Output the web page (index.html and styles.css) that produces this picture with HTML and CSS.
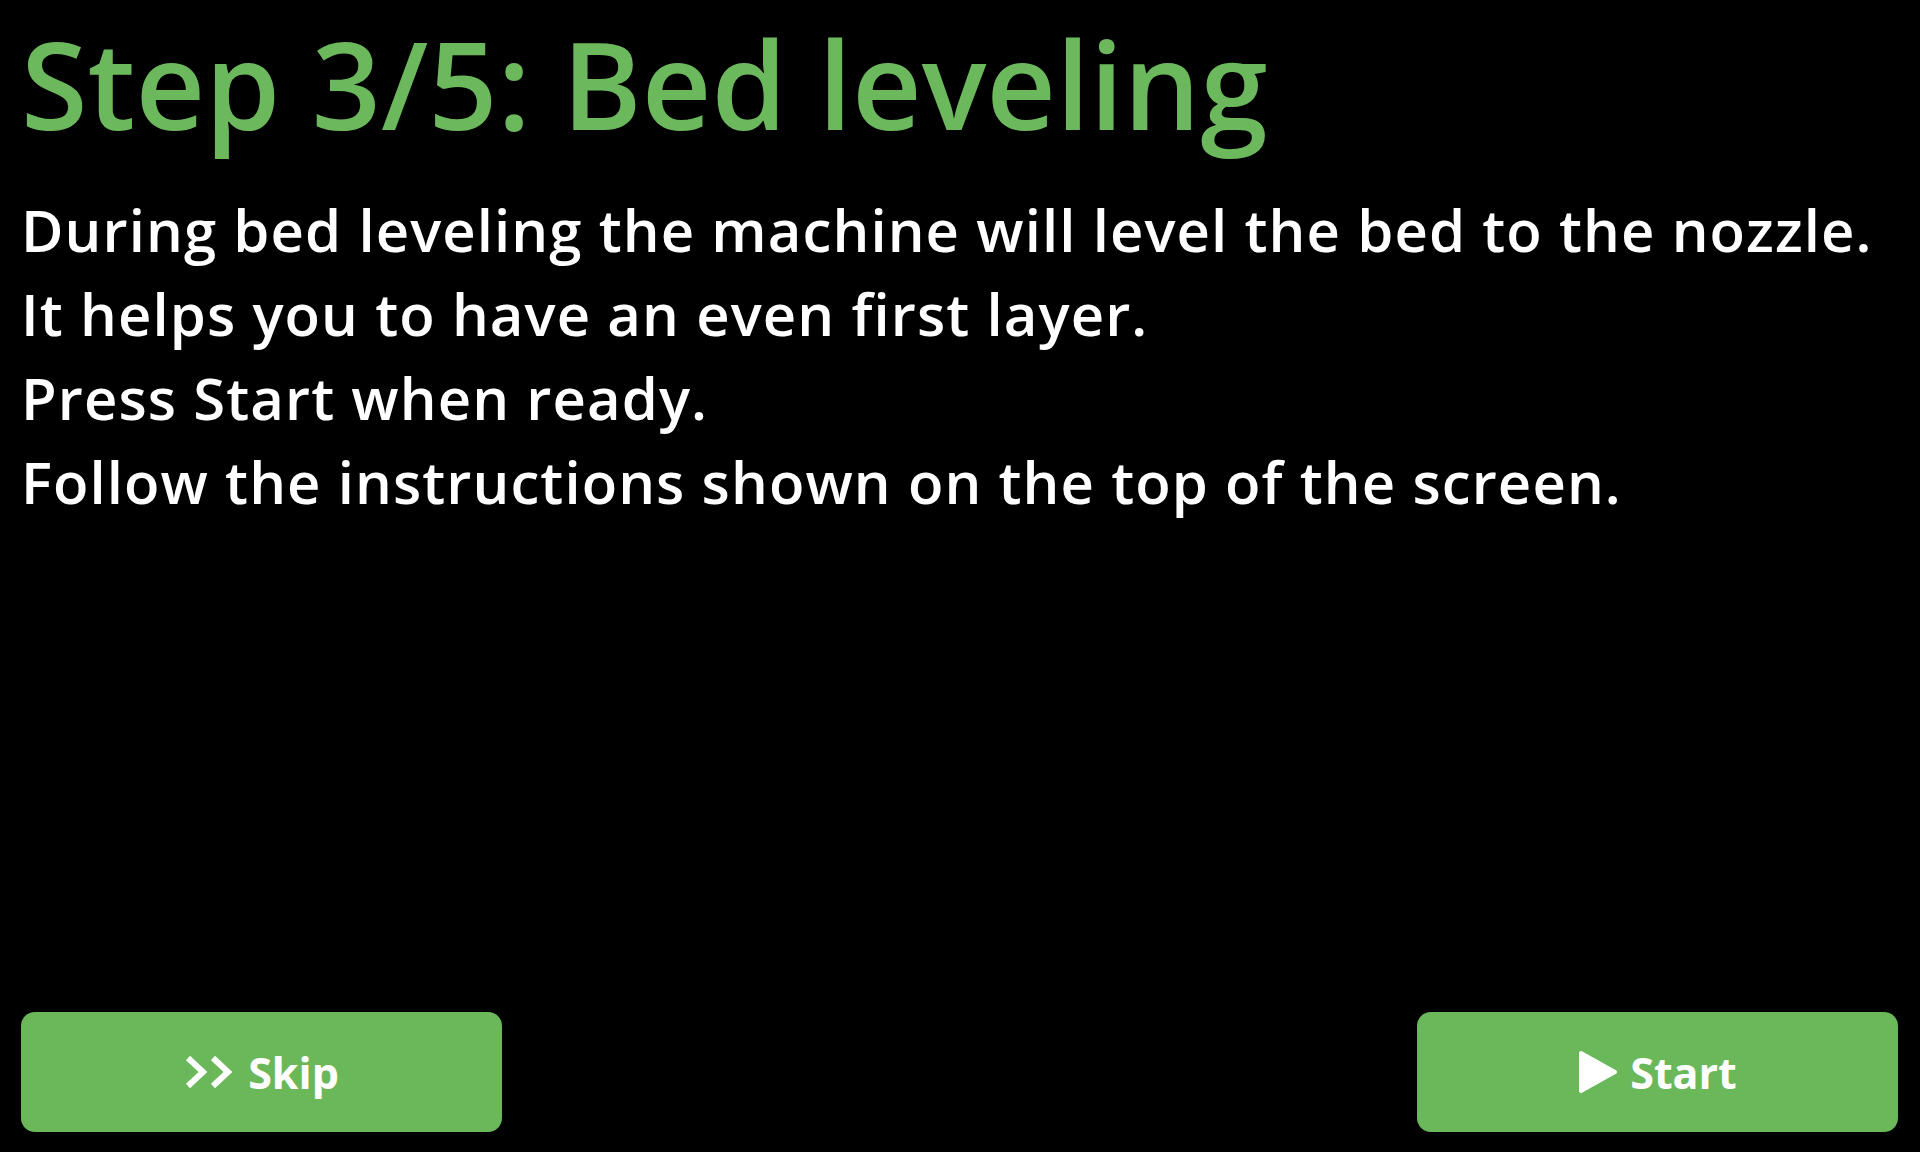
FILE: index.html
```html
<!DOCTYPE html>
<html lang="en">
<head>
<meta charset="utf-8">
<title>Step 3/5: Bed leveling</title>
<link rel="stylesheet" href="styles.css">
</head>
<body>
<div class="screen">
  <h1 class="title">Step 3/5: Bed leveling</h1>
  <div class="desc">
    <div class="line">During bed leveling the machine will level the bed to the nozzle.</div>
    <div class="line">It helps you to have an even first layer.</div>
    <div class="line">Press Start when ready.</div>
    <div class="line">Follow the instructions shown on the top of the screen.</div>
  </div>
  <div class="spacer"></div>
  <div class="actions">
    <button class="btn">
      <svg class="icon-skip" width="52" height="34" viewBox="0 0 52 34" aria-hidden="true">
        <polyline points="4,3 19,17 4,31" fill="none" stroke="#ffffff" stroke-width="6" stroke-linejoin="miter"/>
        <polyline points="29,3 44,17 29,31" fill="none" stroke="#ffffff" stroke-width="6" stroke-linejoin="miter"/>
      </svg>
      <span class="btn-label">Skip</span>
    </button>
    <button class="btn">
      <svg class="icon-play" width="40" height="44" viewBox="0 0 40 44" aria-hidden="true">
        <path d="M3 3 L37 22 L3 41 Z" fill="#ffffff" stroke="#ffffff" stroke-width="4" stroke-linejoin="round"/>
      </svg>
      <span class="btn-label">Start</span>
    </button>
  </div>
</div>
</body>
</html>
```

FILE: styles.css
```css
html, body {
  margin: 0;
  padding: 0;
  background: #000000;
}

.screen {
  box-sizing: border-box;
  width: 1920px;
  height: 1152px;
  display: flex;
  flex-direction: column;
  padding: 0 22px 20px 21px;
  font-family: "Open Sans", "Noto Sans", sans-serif;
}

.title {
  margin: 10px 0 0 0;
  font-size: 121px;
  line-height: 146px;
  font-weight: 600;
  color: #6cb85c;
  letter-spacing: 0;
}

.desc {
  margin-top: 32px;
  color: #ffffff;
  font-size: 58px;
  line-height: 84px;
  font-weight: 600;
  letter-spacing: 1.1px;
}

.spacer {
  flex: 1;
}

.actions {
  display: flex;
  justify-content: space-between;
}

.btn {
  width: 481px;
  height: 120px;
  border: none;
  border-radius: 14px;
  background: #6bb85b;
  color: #ffffff;
  display: flex;
  align-items: center;
  justify-content: center;
  gap: 12px;
  padding: 0;
  font-family: "Open Sans", "Noto Sans", sans-serif;
  font-size: 43px;
  font-weight: 700;
}

.btn-label {
  line-height: 1;
}

.icon-skip, .icon-play {
  display: block;
}
```
